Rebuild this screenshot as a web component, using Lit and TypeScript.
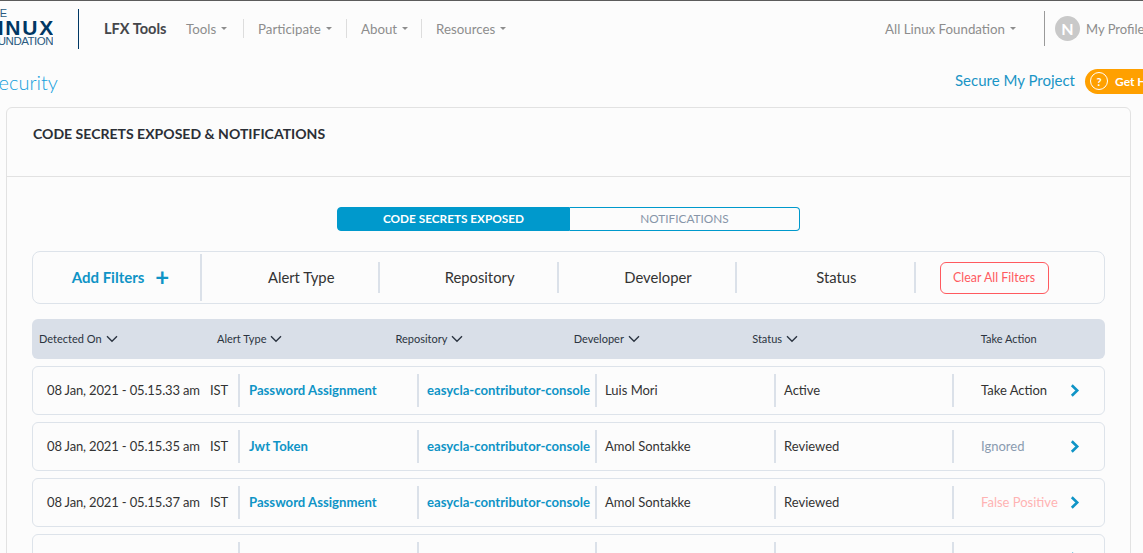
import { LitElement, html, css } from 'lit';
import { customElement } from 'lit/decorators.js';

interface AlertRow {
  detected: string;
  alertType: string;
  repository: string;
  developer: string;
  status: string;
  action: string;
  actionClass: string;
}

const ROWS: AlertRow[] = [
  { detected: '08 Jan, 2021 - 05.15.33 am', alertType: 'Password Assignment', repository: 'easycla-contributor-console', developer: 'Luis Mori', status: 'Active', action: 'Take Action', actionClass: 'take' },
  { detected: '08 Jan, 2021 - 05.15.35 am', alertType: 'Jwt Token', repository: 'easycla-contributor-console', developer: 'Amol Sontakke', status: 'Reviewed', action: 'Ignored', actionClass: 'ignored' },
  { detected: '08 Jan, 2021 - 05.15.37 am', alertType: 'Password Assignment', repository: 'easycla-contributor-console', developer: 'Amol Sontakke', status: 'Reviewed', action: 'False Positive', actionClass: 'false-positive' },
  { detected: '', alertType: '', repository: '', developer: '', status: '', action: '', actionClass: 'take' }
];

const NAV_ITEMS = ['Tools', 'Participate', 'About', 'Resources'];
const FILTERS = ['Alert Type', 'Repository', 'Developer', 'Status'];
const COLUMNS = ['Alert Type', 'Repository', 'Developer', 'Status'];

@customElement('app-root')
export class AppRoot extends LitElement {
  static styles = css`
    :host {
      display: block;
      width: 1143px;
      height: 553px;
      overflow: hidden;
      background: #fcfcfc;
      font-family: 'Lato', 'Open Sans', sans-serif;
      color: #333;
    }

    .topbar {
      display: flex;
      align-items: center;
      height: 56px;
      border-top: 1px solid #5c5c5c;
      box-sizing: border-box;
      white-space: nowrap;
    }

    .logo {
      display: flex;
      flex-direction: column;
      align-items: flex-end;
      width: 53px;
      overflow: hidden;
      color: #003764;
      font-family: 'Liberation Sans', sans-serif;
      margin-top: -3px;
    }

    .logo .the { align-self: flex-start; font-size: 11px; line-height: 9px; margin-left: -15px; color: #2a5a80; }
    .logo .linux { font-size: 21px; line-height: 19px; font-weight: 700; letter-spacing: 1.8px; margin-right: -2px; }
    .logo .foundation { font-size: 11.5px; line-height: 8px; letter-spacing: -0.5px; color: #2a5a80; }

    .logo-rule {
      width: 1px;
      height: 40px;
      margin: 0 25px;
      background: #003764;
    }

    .product {
      width: 82px;
      font-size: 14.6px;
      font-weight: 700;
      color: #45474b;
    }

    .nav { display: flex; align-items: center; font-size: 13.3px; color: #8d8d8d; }
    .nav-item { display: flex; align-items: center; height: 19px; box-sizing: border-box; padding-left: 14px; border-left: 1px solid #ddd; }
    .nav-item:nth-child(1) { width: 57px; border-left: none; padding-left: 0; }
    .nav-item:nth-child(2) { width: 103px; }
    .nav-item:nth-child(3) { width: 75px; }

    .caret {
      display: inline-block;
      margin-left: 5px;
      border: 3px solid transparent;
      border-top: 3px solid #8d8d8d;
      border-bottom: none;
    }

    .org { margin-left: auto; display: flex; align-items: center; font-size: 13.3px; color: #8d8d8d; }

    .profile {
      display: flex;
      align-items: center;
      gap: 6px;
      height: 35px;
      margin-left: 28px;
      padding-left: 10px;
      border-left: 1px solid #9a9a9a;
      font-size: 13px;
      color: #8d8d8d;
      width: 88px;
      overflow: hidden;
    }

    .avatar {
      flex: none;
      display: flex;
      align-items: center;
      justify-content: center;
      width: 25px;
      height: 25px;
      border-radius: 50%;
      background: #c9c9c9;
      color: #fff;
      font-size: 16px;
      font-weight: 700;
    }

    .page-head { display: flex; align-items: center; height: 50px; margin-bottom: 1px; white-space: nowrap; }

    .page-title {
      margin: 2px 0 0 -12px;
      font-size: 20px;
      font-weight: 300;
      color: #14a0dc;
    }

    .secure { margin-left: auto; margin-bottom: 2px; font-size: 15px; color: #1a95c6; }

    .help {
      display: flex;
      align-items: center;
      gap: 7px;
      flex: none;
      width: 58px;
      height: 25px;
      margin-left: 10px;
      padding-left: 5px;
      box-sizing: border-box;
      border-radius: 13px 0 0 13px;
      background: #ffa000;
      color: #fff;
      font-size: 12px;
      font-weight: 700;
      overflow: hidden;
    }

    .help-mark {
      flex: none;
      display: flex;
      align-items: center;
      justify-content: center;
      width: 16px;
      height: 16px;
      border: 1px solid #fff;
      border-radius: 50%;
      font-size: 11px;
    }

    .card {
      margin: 0 12px 0 6px;
      height: 500px;
      border: 1px solid #e2e2e2;
      border-radius: 6px;
      box-sizing: border-box;
    }

    .card-head {
      height: 69px;
      padding: 17px 26px 0;
      box-sizing: border-box;
      border-bottom: 1px solid #e2e2e2;
      font-size: 14.05px;
      line-height: 18px;
      font-weight: 700;
      color: #2b2f36;
    }

    .card-body { padding: 30px 25px 0; }

    .toggle {
      display: grid;
      grid-template-columns: 233px 230px;
      height: 24px;
      margin: 0 0 20px 305px;
      font-size: 11.8px;
      line-height: 22px;
      text-align: center;
    }

    .toggle div { box-sizing: border-box; border: 1px solid #0099cc; }
    .toggle .on { background: #0099cc; color: #fff; font-weight: 700; border-radius: 4px 0 0 4px; }
    .toggle .off { color: #8795a8; border-left: none; border-radius: 0 4px 4px 0; }

    .filters {
      display: grid;
      grid-template-columns: 169px repeat(4, 178.4px) 1fr;
      align-items: center;
      height: 53px;
      box-sizing: border-box;
      border: 1px solid #dde3ea;
      border-radius: 8px;
      font-size: 14.8px;
      color: #333;
      text-align: center;
    }

    .filters > div { box-sizing: border-box; }

    .add {
      display: flex;
      align-items: center;
      justify-content: center;
      gap: 11px;
      height: 47px;
      padding: 0 0 2px 8px;
      border-right: 2px solid #dbe1e9;
      color: #0f94c6;
      font-size: 15px;
      font-weight: 700;
    }

    .plus { font-size: 24px; line-height: 20px; font-weight: 700; }

    .filter { height: 31px; line-height: 31px; padding-left: 22px; border-right: 2px solid #dbe1e9; }

    .clear-wrap { text-align: left; padding-left: 24px; }

    .clear {
      display: inline-block;
      width: 109px;
      height: 32px;
      box-sizing: border-box;
      border: 1px solid #ff5a5f;
      border-radius: 6px;
      color: #ff5a5f;
      font-size: 12.4px;
      line-height: 30px;
      text-align: center;
    }

    .table-head {
      display: grid;
      grid-template-columns: 178px repeat(3, 178.4px) 228.6px 1fr;
      align-items: center;
      height: 40px;
      margin: 15px 0 7px;
      padding: 0 0 1px 7px;
      box-sizing: border-box;
      border-radius: 6px;
      background: #d9dfe8;
      font-size: 11px;
      color: #2b3440;
    }

    .table-head span { display: flex; align-items: center; gap: 4px; }

    .row {
      display: grid;
      grid-template-columns: 207px 179px 178px 179px 178px 1fr;
      align-items: center;
      height: 49px;
      margin-bottom: 7px;
      box-sizing: border-box;
      border: 1px solid #dde3ea;
      border-radius: 6px;
      font-size: 13px;
      color: #333;
      white-space: nowrap;
    }

    .cell {
      display: flex;
      align-items: center;
      height: 33px;
      padding: 0 0 1px 8px;
      box-sizing: border-box;
      border-right: 2px solid #dbe1e9;
    }

    .cell.date { padding-left: 14px; letter-spacing: -0.15px; }
    .zone { margin-left: 10px; letter-spacing: 0; }
    .link { color: #0f94c6; font-size: 13.15px; font-weight: 700; }
    .cell.alert { padding-left: 9px; }

    .cell.action { border-right: none; padding-left: 27px; justify-content: space-between; padding-right: 24px; }
    .take { color: #333; }
    .ignored { color: #8a9bb0; }
    .false-positive { color: #ffb3b3; }
    .chevron { flex: none; margin-left: 4px; }
  `;

  private renderRow(row: AlertRow) {
    return html`
      <div class="row">
        <div class="cell date">${row.detected}${row.detected ? html`<span class="zone">IST</span>` : ''}</div>
        <div class="cell link alert">${row.alertType}</div>
        <div class="cell link">${row.repository}</div>
        <div class="cell">${row.developer}</div>
        <div class="cell">${row.status}</div>
        <div class="cell action">
          <span class="${row.actionClass}">${row.action}</span>
          <svg class="chevron" width="10" height="13" viewBox="0 0 10 13">
            <path d="M1.8 1.2 L7.2 6.5 L1.8 11.8" fill="none" stroke="#0f94c6" stroke-width="2.6"></path>
          </svg>
        </div>
      </div>
    `;
  }

  private sortIcon() {
    return html`<svg width="12" height="8" viewBox="0 0 12 8">
      <path d="M1 1.2 L6 6.2 L11 1.2" fill="none" stroke="#2b3440" stroke-width="1.4"></path>
    </svg>`;
  }

  protected render() {
    return html`
      <header class="topbar">
        <div class="logo">
          <span class="the">THE</span>
          <span class="linux">LINUX</span>
          <span class="foundation">FOUNDATION</span>
        </div>
        <div class="logo-rule"></div>
        <div class="product">LFX Tools</div>
        <nav class="nav">
          ${NAV_ITEMS.map((item) => html`<div class="nav-item">${item}<i class="caret"></i></div>`)}
        </nav>
        <div class="org">All Linux Foundation<i class="caret"></i></div>
        <div class="profile"><span class="avatar">N</span>My Profile</div>
      </header>

      <div class="page-head">
        <div class="page-title">Security</div>
        <a class="secure">Secure My Project</a>
        <div class="help"><span class="help-mark">?</span>Get Help</div>
      </div>

      <section class="card">
        <div class="card-head">CODE SECRETS EXPOSED &amp; NOTIFICATIONS</div>
        <div class="card-body">
          <div class="toggle">
            <div class="on">CODE SECRETS EXPOSED</div>
            <div class="off">NOTIFICATIONS</div>
          </div>

          <div class="filters">
            <div class="add">Add Filters <span class="plus">+</span></div>
            ${FILTERS.map((f) => html`<div class="filter">${f}</div>`)}
            <div class="clear-wrap"><span class="clear">Clear All Filters</span></div>
          </div>

          <div class="table-head">
            <span>Detected On ${this.sortIcon()}</span>
            ${COLUMNS.map((c) => html`<span>${c} ${this.sortIcon()}</span>`)}
            <span>Take Action</span>
          </div>

          ${ROWS.map((r) => this.renderRow(r))}
        </div>
      </section>
    `;
  }
}
